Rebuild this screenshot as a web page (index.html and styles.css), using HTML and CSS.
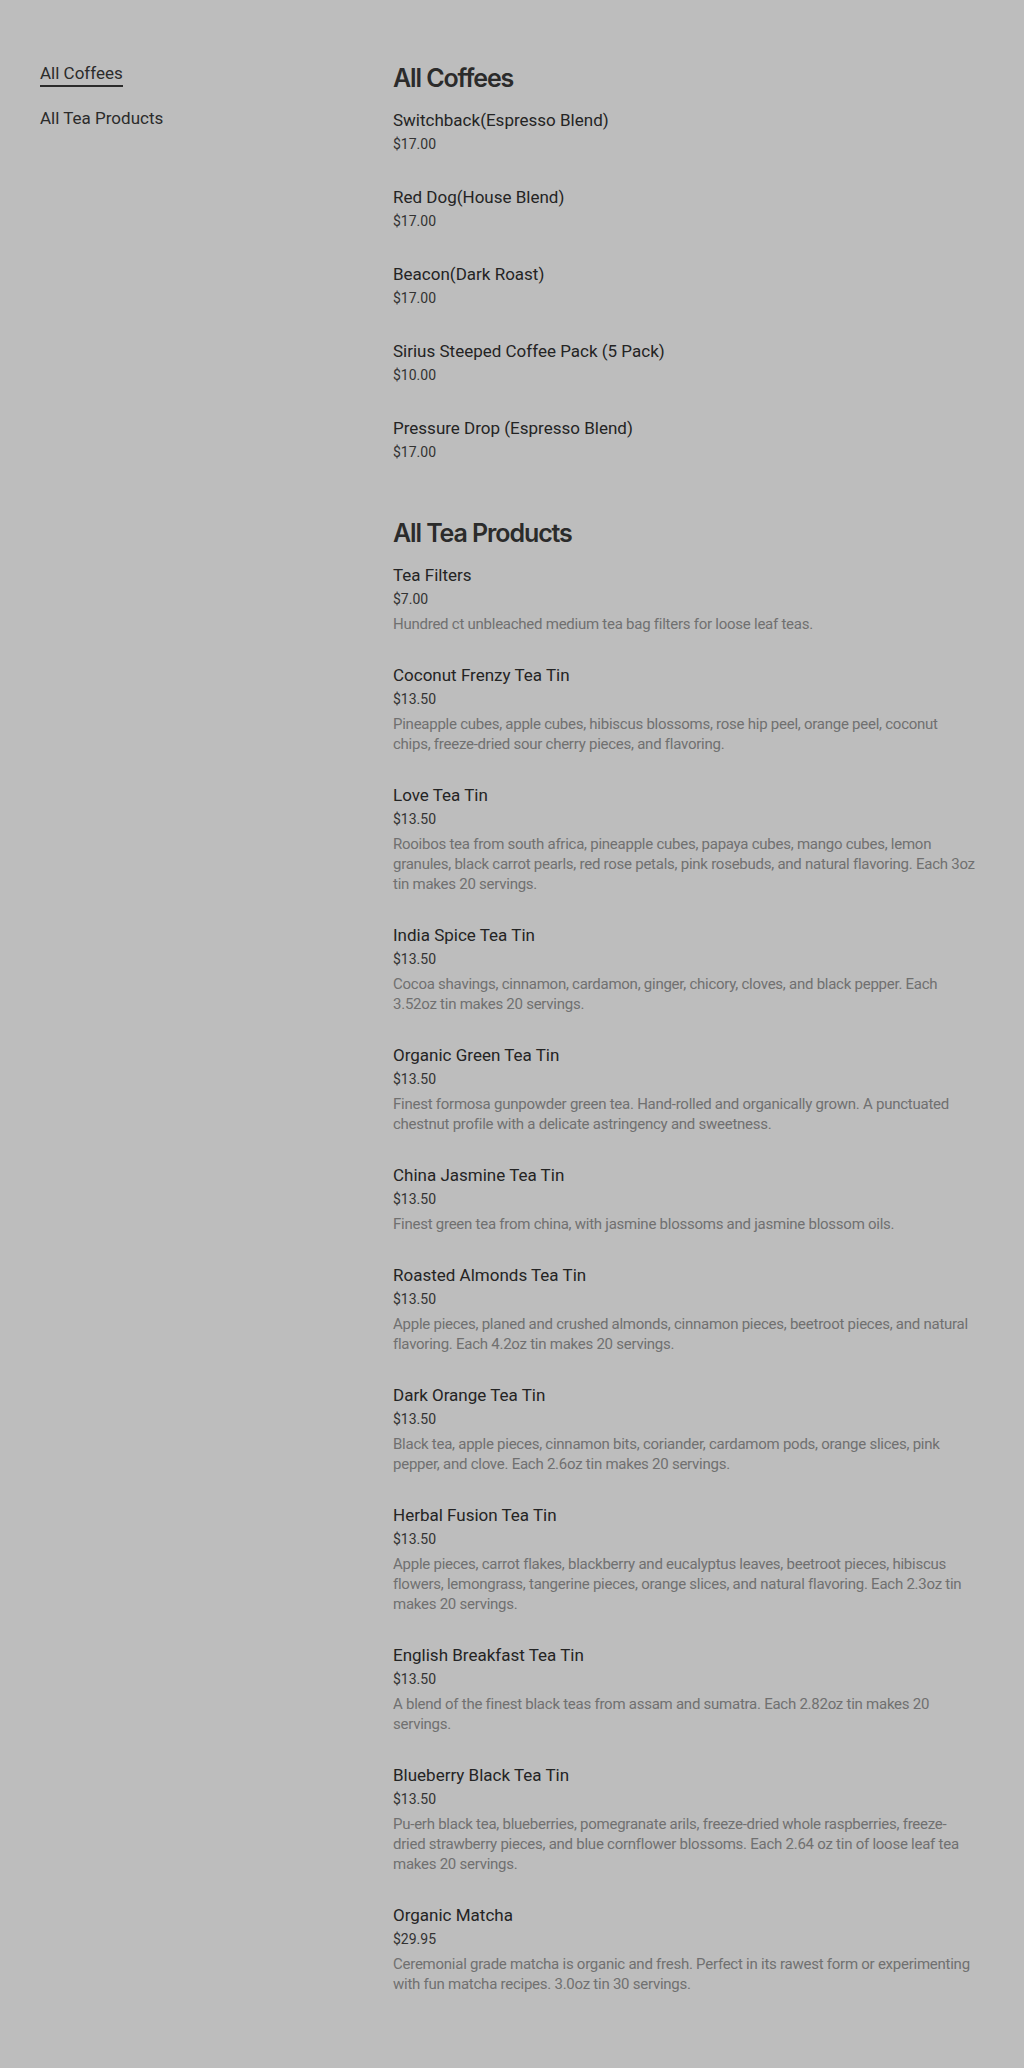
FILE: index.html
```html
<!DOCTYPE html>
<html lang="en">
<head>
    <meta charset="UTF-8">
    <meta name="viewport" content="width=device-width, initial-scale=1.0">
    <title>Shop</title>
    <link rel="stylesheet" href="styles.css">
</head>
<body>

<div class="page">
    <!-- Category navigation -->
    <nav class="sidebar">
        <a class="nav-link active" href="#coffees">All Coffees</a>
        <a class="nav-link" href="#teas">All Tea Products</a>
    </nav>

    <main class="catalog">
        <section class="category" id="coffees">
            <h2>All Coffees</h2>
            <div class="product">
                <h3 class="product-name">Switchback(Espresso Blend)</h3>
                <p class="product-price">$17.00</p>
            </div>
            <div class="product">
                <h3 class="product-name">Red Dog(House Blend)</h3>
                <p class="product-price">$17.00</p>
            </div>
            <div class="product">
                <h3 class="product-name">Beacon(Dark Roast)</h3>
                <p class="product-price">$17.00</p>
            </div>
            <div class="product">
                <h3 class="product-name">Sirius Steeped Coffee Pack (5 Pack)</h3>
                <p class="product-price">$10.00</p>
            </div>
            <div class="product">
                <h3 class="product-name">Pressure Drop (Espresso Blend)</h3>
                <p class="product-price">$17.00</p>
            </div>
        </section>

        <section class="category" id="teas">
            <h2>All Tea Products</h2>
            <div class="product">
                <h3 class="product-name">Tea Filters</h3>
                <p class="product-price">$7.00</p>
                <p class="product-desc">Hundred ct unbleached medium tea bag filters for loose leaf teas.</p>
            </div>
            <div class="product">
                <h3 class="product-name">Coconut Frenzy Tea Tin</h3>
                <p class="product-price">$13.50</p>
                <p class="product-desc">Pineapple cubes, apple cubes, hibiscus blossoms, rose hip peel, orange peel, coconut chips, freeze-dried sour cherry pieces, and flavoring.</p>
            </div>
            <div class="product">
                <h3 class="product-name">Love Tea Tin</h3>
                <p class="product-price">$13.50</p>
                <p class="product-desc">Rooibos tea from south africa, pineapple cubes, papaya cubes, mango cubes, lemon granules, black carrot pearls, red rose petals, pink rosebuds, and natural flavoring. Each 3oz tin makes 20 servings.</p>
            </div>
            <div class="product">
                <h3 class="product-name">India Spice Tea Tin</h3>
                <p class="product-price">$13.50</p>
                <p class="product-desc">Cocoa shavings, cinnamon, cardamon, ginger, chicory, cloves, and black pepper. Each 3.52oz tin makes 20 servings.</p>
            </div>
            <div class="product">
                <h3 class="product-name">Organic Green Tea Tin</h3>
                <p class="product-price">$13.50</p>
                <p class="product-desc">Finest formosa gunpowder green tea. Hand-rolled and organically grown. A punctuated chestnut profile with a delicate astringency and sweetness.</p>
            </div>
            <div class="product">
                <h3 class="product-name">China Jasmine Tea Tin</h3>
                <p class="product-price">$13.50</p>
                <p class="product-desc">Finest green tea from china, with jasmine blossoms and jasmine blossom oils.</p>
            </div>
            <div class="product">
                <h3 class="product-name">Roasted Almonds Tea Tin</h3>
                <p class="product-price">$13.50</p>
                <p class="product-desc">Apple pieces, planed and crushed almonds, cinnamon pieces, beetroot pieces, and natural flavoring. Each 4.2oz tin makes 20 servings.</p>
            </div>
            <div class="product">
                <h3 class="product-name">Dark Orange Tea Tin</h3>
                <p class="product-price">$13.50</p>
                <p class="product-desc">Black tea, apple pieces, cinnamon bits, coriander, cardamom pods, orange slices, pink pepper, and clove. Each 2.6oz tin makes 20 servings.</p>
            </div>
            <div class="product">
                <h3 class="product-name">Herbal Fusion Tea Tin</h3>
                <p class="product-price">$13.50</p>
                <p class="product-desc">Apple pieces, carrot flakes, blackberry and eucalyptus leaves, beetroot pieces, hibiscus flowers, lemongrass, tangerine pieces, orange slices, and natural flavoring. Each 2.3oz tin makes 20 servings.</p>
            </div>
            <div class="product">
                <h3 class="product-name">English Breakfast Tea Tin</h3>
                <p class="product-price">$13.50</p>
                <p class="product-desc">A blend of the finest black teas from assam and sumatra. Each 2.82oz tin makes 20 servings.</p>
            </div>
            <div class="product">
                <h3 class="product-name">Blueberry Black Tea Tin</h3>
                <p class="product-price">$13.50</p>
                <p class="product-desc">Pu-erh black tea, blueberries, pomegranate arils, freeze-dried whole raspberries, freeze-dried strawberry pieces, and blue cornflower blossoms. Each 2.64 oz tin of loose leaf tea makes 20 servings.</p>
            </div>
            <div class="product">
                <h3 class="product-name">Organic Matcha</h3>
                <p class="product-price">$29.95</p>
                <p class="product-desc">Ceremonial grade matcha is organic and fresh. Perfect in its rawest form or experimenting with fun matcha recipes. 3.0oz tin 30 servings.</p>
            </div>
        </section>
    </main>
</div>

</body>
</html>
```

FILE: styles.css
```css
body {
    font-family: 'Roboto', 'Liberation Sans', sans-serif;
    background-color: #bdbdbd;
    color: #2b2b2b;
    margin: 0;
    padding: 0;
}

.page {
    display: flex;
    padding: 62px 47px 60px 40px;
}

.sidebar {
    width: 353px;
    flex-shrink: 0;
    display: flex;
    flex-direction: column;
    align-items: flex-start;
    gap: 20px;
}

.nav-link {
    font-size: 17px;
    line-height: 22px;
    color: #2b2b2b;
    text-decoration: none;
    border-bottom: 2px solid transparent;
    padding-bottom: 1px;
}

.nav-link.active {
    border-bottom-color: #2b2b2b;
}

.catalog {
    flex: 1;
    min-width: 0;
}

.category {
    margin-bottom: 53px;
}

.category h2 {
    font-family: 'Inter', sans-serif;
    font-size: 25px;
    font-weight: 600;
    letter-spacing: -1.1px;
    line-height: 32px;
    margin: 0 0 14px;
}

.product {
    margin-bottom: 29px;
}

.product-name {
    font-size: 17px;
    font-weight: 400;
    line-height: 24px;
    color: #242424;
    margin: 0;
}

.product-price {
    font-size: 14px;
    line-height: 24px;
    color: #333;
    margin: 0;
}

.product-desc {
    font-size: 15px;
    line-height: 20px;
    letter-spacing: -0.25px;
    color: #707070;
    margin: 3px 0 0;
}
```
